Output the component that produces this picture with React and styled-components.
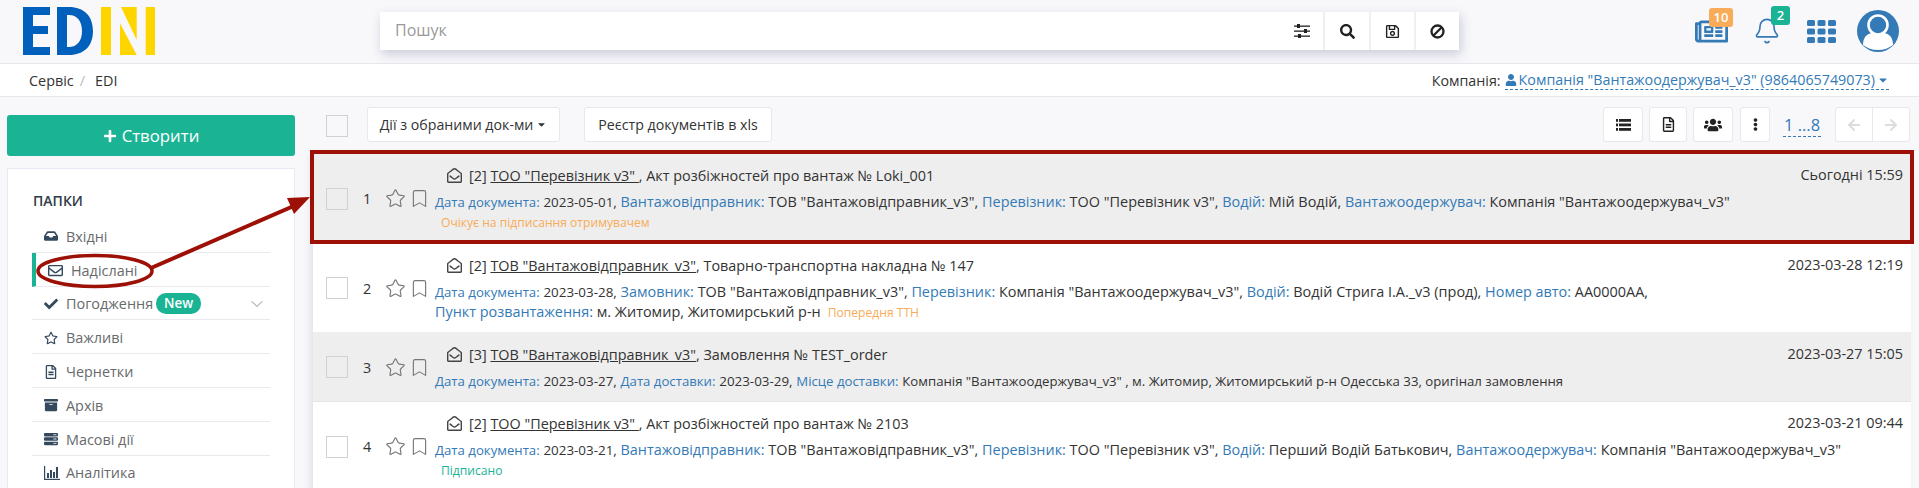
import React from 'react';
import styled, { createGlobalStyle } from 'styled-components';
import { FaInbox, FaRegEnvelope, FaCheck, FaRegStar, FaRegFileAlt, FaArchive, FaServer, FaRegEnvelopeOpen, FaSearch, FaRegSave, FaUsers, FaEllipsisV, FaArrowLeft, FaArrowRight, FaRegNewspaper, FaUser, FaPlus, FaCaretDown } from 'react-icons/fa';
import { Bell, ChevronDown, Star, Bookmark } from 'lucide-react';

const Global = createGlobalStyle`
  html, body { margin: 0; padding: 0; background: #f8f8fb; }
  body { font-family: "Open Sans", "Noto Sans", sans-serif; font-size: 14.4px; color: #333; overflow: hidden; }
  #root { height: 488px; overflow: hidden; }
  * { box-sizing: border-box; }
`;
const Page = styled.div`position: relative; height: 488px; overflow: hidden;`;
const Header = styled.header`
  height: 64px; display: flex; align-items: center; border-bottom: 1px solid #e7e7ec; padding-left: 23px;
`;
const LogoBox = styled.svg`width: 132px; height: 48px; flex: none; margin-right: 225px; margin-top: -2px;`;
const Search = styled.div`
  width: 1079px; height: 38px; display: flex; align-items: stretch; background: #fff; margin-top: -1px;
  box-shadow: 2px 4px 10px rgba(60, 70, 110, 0.25);
`;
const SearchInput = styled.div`flex: 1; padding-left: 15px; font-size: 16px; line-height: 37px; color: #999;`;
const SearchBtn = styled.div`
  width: ${p => p.$w || 45}px; display: flex; align-items: center; justify-content: center; color: #222; font-size: 15px;
  border-left: ${p => (p.$plain ? 'none' : '2px solid #f0f0f0')};
`;
const TopIcons = styled.div`flex: 1; display: flex; align-items: center; justify-content: flex-end; padding-right: 20px; margin-top: -1px; color: #337ab7;`;
const TopIcon = styled.div`
  position: relative; display: flex; align-items: center; justify-content: center; width: ${p => p.$w}px; margin-left: ${p => p.$ml}px; flex: none;
`;
const Badge = styled.span`
  position: absolute; top: ${p => p.$top}px; left: ${p => p.$left}px; min-width: ${p => p.$w}px; height: 19px; border-radius: 3px;
  background: ${p => p.$bg}; color: #fff; font-size: 13px; font-weight: 600; line-height: 19px; text-align: center;
`;
const Crumbs = styled.div`
  height: 33px; background: #fff; border-bottom: 1px solid #e7e7ec; display: flex; align-items: center; justify-content: space-between;
  padding: 0 30px 0 29px;
`;
const CrumbLeft = styled.div`display: flex; align-items: center; color: #333;`;
const CrumbSep = styled.span`color: #bbb; margin: 0 10px 0 6px;`;
const CompanyLabel = styled.span`color: #333; font-size: 14.3px;`;
const CompanyLink = styled.span`
  color: #337ab7; border-bottom: 1px dashed #337ab7; margin-left: 4px; display: inline-flex; align-items: center; gap: 2px; line-height: 19px; font-size: 14.3px;
`;
const Body = styled.div`display: flex; align-items: flex-start; padding: 0 8px 0 7px;`;
const Sidebar = styled.aside`width: 288px; flex: none; padding-top: 18px; margin-right: 18px;`;
const CreateButton = styled.div`
  height: 41px; background: #1ab394; border-radius: 3px; color: #fff; font-size: 16.8px; display: flex; align-items: center; justify-content: center; gap: 5px;
`;
const Card = styled.div`
  margin-top: 12px; background: #fff; border: 1px solid #e7eaf5; padding: 22px 24px 0; height: 400px;
`;
const CardTitle = styled.div`font-weight: 600; font-size: 14px; line-height: 20px; color: #2f3b48; margin-bottom: 8px; padding-left: 1px;`;
const Item = styled.div`
  height: 33.8px; display: flex; align-items: center; border-bottom: 1px solid #e9e9ee; color: #676a6c; position: relative;
  padding-top: 2px;
  padding-left: ${p => (p.$active ? 12 : 12)}px;
  ${p => p.$active && 'border-left: 4px solid #1ab394;'}
`;
const ItemIcon = styled.span`width: ${p => (p.$active ? 23 : 22)}px; display: flex; flex: none; color: #34495e; font-size: 14px;`;
const NewTag = styled.span`
  background: #1ab394; color: #fff; border-radius: 10px; font-size: 13.400px; font-weight: 600; height: 21px; line-height: 20px; padding: 0 8px; margin-left: 3px;
`;
const Chevron = styled.span`margin-left: auto; margin-right: 3px; display: flex; color: #777;`;
const Main = styled.main`flex: 1; min-width: 0;`;
const Toolbar = styled.div`height: 57px; display: flex; align-items: flex-start; padding: 10px 1px 0 13px;`;
const Check = styled.span`
  width: 22px; height: 22px; flex: none; border: 1px solid #d5d0cc; background: ${p => (p.$gray ? 'transparent' : '#fff')}; display: block;
`;
const ToolCheck = styled(Check)`margin-top: 8px; margin-right: 19px;`;
const ToolButton = styled.div`
  height: 35px; background: #fff; border: 1px solid #e7e7ec; border-radius: 3px; display: flex; align-items: center; justify-content: center;
  width: ${p => p.$w}px; margin-right: ${p => p.$mr || 0}px; color: #222; font-size: 14px; flex: none;
`;
const ToolText = styled.span`font-size: 14.2px; color: #333; display: inline-flex; align-items: center; gap: 3px;`;
const Spacer = styled.div`flex: 1;`;
const Pager = styled.span`
  font-size: 16.500px; color: #337ab7; border-bottom: 1px dashed #337ab7; line-height: 23px; margin: 6px 14px 0 13px; width: 38px; text-align: center; flex: none;
`;
const NavGroup = styled.div`
  display: flex; width: 75px; height: 35px; background: #fff; border: 1px solid #e7e7ec; border-radius: 3px; flex: none; color: #ddd; font-size: 14px;
`;
const NavHalf = styled.div`flex: 1; display: flex; align-items: center; justify-content: center; & + & { border-left: 1px solid #e7e7ec; }`;
const List = styled.div`box-shadow: -3px 0 6px rgba(60, 70, 110, 0.12);`;
const Row = styled.div`
  position: relative; display: flex; align-items: stretch; padding: 0 8px 0 13px;
  background: ${p => (p.$gray ? '#eeeeee' : '#fff')};
  border-bottom: 1px solid ${p => (p.$gray ? '#e6e6e6' : '#eee')};
  ${p => p.$marked && `
    &::after { content: ''; position: absolute; inset: -4px -3px -1px -3px; border: 4px solid #9c1006; pointer-events: none; }
  `}
`;
const RowControls = styled.div`width: 109px; flex: none; display: flex; align-items: center; color: #555;`;
const Num = styled.span`width: 22px; margin-left: 15px; color: #333; flex: none;`;
const Mark = styled.span`display: flex; color: #777; margin-right: ${p => p.$mr}px;`;
const RowBody = styled.div`flex: 1; min-width: 0; padding: 12px 0 10px;`;
const TitleLine = styled.div`display: flex; align-items: center; height: 18px; padding-left: 12px; margin-bottom: 8px; white-space: pre;`;
const Envelope = styled.span`display: flex; width: 22px; color: #444; font-size: 15px; flex: none;`;
const Holder = styled.span`text-decoration: underline;`;
const Info = styled.div`line-height: 20px; height: 20px; white-space: nowrap; font-size: 14.45px; color: #333;`;
const Field = styled.span`color: #337ab7; font-size: ${p => (p.$big ? 14.4 : 13.2)}px;`;
const DateValue = styled.span`font-size: 13.4px;`;
const Small = styled.span`font-size: 13.2px;`;
const Status = styled.div`line-height: 21px; font-size: 12.100px; padding-left: 6px; color: ${p => p.$color};`;
const InlineStatus = styled.span`font-size: 12.100px; color: #f8ac59; margin-left: 7px;`;
const Time = styled.div`flex: none; padding-top: 12px; line-height: 18px; color: #333;`;
const Annotation = styled.svg`position: absolute; left: 0; top: 0; width: 320px; height: 300px; pointer-events: none;`;

const Logo = () => (
  <LogoBox viewBox="0 0 132 48">
    <path fill="#0060bb" d="M0 0h27v8H10v11h15v8H10v13h17v8H0zM34 0h12c15 0 24 9 24 24s-9 24-24 24H34zM44 8v32h2c8 0 13-6 13-16S54 8 46 8z" />
    <path fill="#ffd500" d="M78 0h10v48H78zM97 16.300L113.700 48H97zM98 0h15.700v33zM122.700 0H132v48h-9.300z" />
  </LogoBox>
);
const Avatar = () => (
  <svg width="42" height="42" viewBox="0 0 42 42">
    <circle cx="21" cy="21" r="21" fill="#337ab7" />
    <path d="M6 35c0-7 3-11 9-12h12c6 1 9 5 9 12-4 3-9 5-15 5s-11-2-15-5z" fill="#fff" />
    <circle cx="21" cy="15" r="9.500" fill="#337ab7" stroke="#fff" strokeWidth="2.600" />
  </svg>
);
const Sliders = () => (
  <svg width="16" height="16" viewBox="0 0 16 16" fill="#222">
    <rect x="0" y="2.500" width="16" height="1.300" /><rect x="3" y="1" width="3" height="4" />
    <rect x="0" y="7.500" width="16" height="1.300" /><rect x="10" y="6" width="3" height="4" />
    <rect x="0" y="12.500" width="16" height="1.300" /><rect x="4" y="11" width="3" height="4" />
  </svg>
);
const Ban = () => (
  <svg width="15" height="15" viewBox="0 0 15 15" fill="none" stroke="#222" strokeWidth="2.300">
    <circle cx="7.500" cy="7.500" r="6" /><line x1="3.500" y1="11.500" x2="11.500" y2="3.500" />
  </svg>
);
const Grid = () => (
  <svg width="29" height="23" viewBox="0 0 29 23" fill="currentColor">
    {[0, 8.500, 17].map(y => [0, 10.500, 21].map(x => <rect key={`${x}-${y}`} x={x} y={y} width="8" height="6" rx="1.500" />))}
  </svg>
);
const ListIcon = () => (
  <svg width="15" height="12" viewBox="0 0 15 12" fill="#222">
    {[0, 4.500, 9].map(y => <g key={y}><rect x="0" y={y} width="2" height="2.800" /><rect x="3" y={y} width="12" height="2.800" /></g>)}
  </svg>
);
const ChartIcon = () => (
  <svg width="16" height="14" viewBox="0 0 16 14" fill="#34495e">
    <rect x="0" y="0" width="1.200" height="14" /><rect x="0" y="12.800" width="16" height="1.200" />
    <rect x="3" y="7" width="2" height="5" /><rect x="6" y="4" width="2" height="8" /><rect x="9" y="6" width="2" height="6" /><rect x="12" y="1" width="2" height="11" />
  </svg>
);

const folders = [
  { icon: <FaInbox />, label: 'Вхідні' },
  { icon: <FaRegEnvelope size={15} />, label: 'Надіслані', active: true },
  { icon: <FaCheck />, label: 'Погодження', tag: true },
  { icon: <FaRegStar />, label: 'Важливі' },
  { icon: <FaRegFileAlt />, label: 'Чернетки' },
  { icon: <FaArchive />, label: 'Архів' },
  { icon: <FaServer />, label: 'Масові дії' },
  { icon: <ChartIcon />, label: 'Аналітика' },
];

const F = ({ children, big }) => <Field $big={big}>{children}</Field>;

const rows = [
  {
    n: 1, gray: true, marked: true, count: 2, holder: 'ТОО "Перевізник v3" ', rest: ', Акт розбіжностей про вантаж № Loki_001', time: 'Сьогодні 15:59',
    info: [<Info key="a"><F>Дата документа:</F> <DateValue>2023-05-01,</DateValue> <F big>Вантажовідправник:</F> ТОВ "Вантажовідправник_v3", <F big>Перевізник:</F> ТОО "Перевізник v3", <F big>Водій:</F> Мій Водій, <F big>Вантажоодержувач:</F> Компанія "Вантажоодержувач_v3"</Info>],
    status: ['Очікує на підписання отримувачем', '#f8ac59'],
  },
  {
    n: 2, count: 2, holder: 'ТОВ "Вантажовідправник_v3"', rest: ', Товарно-транспортна накладна № 147', time: '2023-03-28 12:19',
    info: [
      <Info key="a"><F>Дата документа:</F> <DateValue>2023-03-28,</DateValue> <F big>Замовник:</F> ТОВ "Вантажовідправник_v3", <F big>Перевізник:</F> Компанія "Вантажоодержувач_v3", <F big>Водій:</F> Водій Стрига І.А._v3 (прод), <F big>Номер авто:</F> АА0000АА,</Info>,
      <Info key="b"><F big>Пункт розвантаження:</F> м. Житомир, Житомирський р-н<InlineStatus>Попередня ТТН</InlineStatus></Info>,
    ],
  },
  {
    n: 3, gray: true, count: 3, holder: 'ТОВ "Вантажовідправник_v3"', rest: ', Замовлення № TEST_order', time: '2023-03-27 15:05',
    info: [<Info key="a"><F>Дата документа:</F> <DateValue>2023-03-27,</DateValue> <F>Дата доставки:</F> <DateValue>2023-03-29,</DateValue> <F>Місце доставки:</F> <Small>Компанія "Вантажоодержувач_v3" , м. Житомир, Житомирський р-н Одесська 33, оригінал замовлення</Small></Info>],
  },
  {
    n: 4, count: 2, holder: 'ТОО "Перевізник v3" ', rest: ', Акт розбіжностей про вантаж № 2103', time: '2023-03-21 09:44',
    info: [<Info key="a"><F>Дата документа:</F> <DateValue>2023-03-21,</DateValue> <F big>Вантажовідправник:</F> ТОВ "Вантажовідправник_v3", <F big>Перевізник:</F> ТОО "Перевізник v3", <F big>Водій:</F> Перший Водій Батькович, <F big>Вантажоодержувач:</F> Компанія "Вантажоодержувач_v3"</Info>],
    status: ['Підписано', '#1ab394'],
  },
];

export default function App() {
  return (
    <Page>
      <Global />
      <Header>
        <Logo />
        <Search>
          <SearchInput>Пошук</SearchInput>
          <SearchBtn $plain $w={42}><Sliders /></SearchBtn>
          <SearchBtn $w={46}><FaSearch /></SearchBtn>
          <SearchBtn><FaRegSave /></SearchBtn>
          <SearchBtn><Ban /></SearchBtn>
        </Search>
        <TopIcons>
          <TopIcon $ml={0} $w={33}><FaRegNewspaper size={33} /><Badge $top={-7} $left={14} $w={24} $bg="#f8ac59">10</Badge></TopIcon>
          <TopIcon $ml={25} $w={28}><Bell size={34} strokeWidth={1.400} /><Badge $top={-8} $left={18} $w={19} $bg="#1ab394">2</Badge></TopIcon>
          <TopIcon $ml={26} $w={29}><Grid /></TopIcon>
          <TopIcon $ml={21} $w={42}><Avatar /></TopIcon>
        </TopIcons>
      </Header>
      <Crumbs>
        <CrumbLeft>Сервіс<CrumbSep>/</CrumbSep>EDI</CrumbLeft>
        <div>
          <CompanyLabel>Компанія:</CompanyLabel>
          <CompanyLink><FaUser size={12} />Компанія "Вантажоодержувач_v3" (9864065749073)<FaCaretDown size={12} /></CompanyLink>
        </div>
      </Crumbs>
      <Body>
        <Sidebar>
          <CreateButton><FaPlus size={14} />Створити</CreateButton>
          <Card>
            <CardTitle>ПАПКИ</CardTitle>
            {folders.map(f => (
              <Item key={f.label} $active={f.active}>
                <ItemIcon $active={f.active}>{f.icon}</ItemIcon>
                {f.label}
                {f.tag && <NewTag>New</NewTag>}
                {f.tag && <Chevron><ChevronDown size={20} strokeWidth={1} /></Chevron>}
              </Item>
            ))}
          </Card>
        </Sidebar>
        <Main>
          <Toolbar>
            <ToolCheck $gray />
            <ToolButton $w={193} $mr={24}><ToolText>Дії з обраними док-ми <FaCaretDown size={11} /></ToolText></ToolButton>
            <ToolButton $w={188}><ToolText>Реєстр документів в xls</ToolText></ToolButton>
            <Spacer />
            <ToolButton $w={40} $mr={6}><ListIcon /></ToolButton>
            <ToolButton $w={38} $mr={6}><FaRegFileAlt size={15} /></ToolButton>
            <ToolButton $w={40} $mr={7}><FaUsers size={18} /></ToolButton>
            <ToolButton $w={30}><FaEllipsisV size={13} /></ToolButton>
            <Pager>1 ...8</Pager>
            <NavGroup>
              <NavHalf><FaArrowLeft /></NavHalf>
              <NavHalf><FaArrowRight /></NavHalf>
            </NavGroup>
          </Toolbar>
          <List>
            {rows.map(r => (
              <Row key={r.n} $gray={r.gray} $marked={r.marked}>
                <RowControls>
                  <Check $gray={r.gray} />
                  <Num>{r.n}</Num>
                  <Mark $mr={3}><Star size={21} strokeWidth={1.300} /></Mark>
                  <Mark $mr={0}><Bookmark size={21} strokeWidth={1.300} /></Mark>
                </RowControls>
                <RowBody>
                  <TitleLine>
                    <Envelope><FaRegEnvelopeOpen /></Envelope>
                    [{r.count}] <Holder>{r.holder}</Holder>{r.rest}
                  </TitleLine>
                  {r.info}
                  {r.status && <Status $color={r.status[1]}>{r.status[0]}</Status>}
                </RowBody>
                <Time>{r.time}</Time>
              </Row>
            ))}
          </List>
        </Main>
      </Body>
      <Annotation viewBox="0 0 320 300">
        <ellipse cx="95" cy="271" rx="57" ry="15.500" fill="none" stroke="#9c1006" strokeWidth="3.500" />
        <line x1="151" y1="268" x2="296" y2="205" stroke="#9c1006" strokeWidth="4" />
        <polygon points="310,197 287,198 294,214" fill="#9c1006" />
      </Annotation>
    </Page>
  );
}
